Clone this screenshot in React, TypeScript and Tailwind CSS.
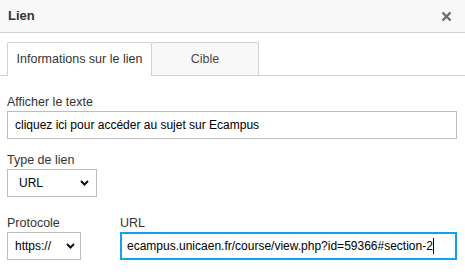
export default function App() {
  return (
    <div className="w-[465px] h-[280px] bg-white text-[12.5px] text-[#333] font-['Liberation_Sans',Arial,sans-serif] overflow-hidden">
      {/* en-tête */}
      <div className="h-[33px] bg-[#f8f8f8] border-b border-[#d1d1d1] flex items-center justify-between pl-2 pr-[13px]">
        <span className="font-bold text-[13px]">Lien</span>
        <svg width="11" height="11" viewBox="0 0 11 11">
          <path d="M1.5 1.5 L9.5 9.5 M9.5 1.5 L1.5 9.5" stroke="#6b6b6b" strokeWidth="2.4" />
        </svg>
      </div>

      {/* onglets */}
      <div className="mt-[9px] flex border-b border-[#d1d1d1] pl-[7px]">
        <div className="w-[145px] h-[34px] -mb-px bg-white border border-b-0 border-[#d1d1d1] rounded-t-[2px] flex items-center justify-center whitespace-nowrap">
          Informations sur le lien
        </div>
        <div className="w-[107px] h-[33px] bg-[#f8f8f8] border border-l-0 border-b-0 border-[#d1d1d1] rounded-t-[2px] flex items-center justify-center text-[#484848]">
          Cible
        </div>
      </div>

      <div className="px-[7px]">
        <label className="block mt-[18px] leading-4 mb-px">Afficher le texte</label>
        <div className="w-[450px] h-[28px] border border-[#bcbcbc] flex items-center pl-[7px] text-black text-[12px] whitespace-nowrap">
          cliquez ici pour accéder au sujet sur Ecampus
        </div>

        <label className="block mt-[13px] leading-4 mb-px">Type de lien</label>
        <div className="w-[90px] h-[28px] border border-[#bcbcbc] flex items-center justify-between pl-[11px] pr-[7px] text-black text-[12px]">
          <span>URL</span>
          <svg width="9" height="6" viewBox="0 0 9 6">
            <path d="M1 1 L4.5 4.5 L8 1" fill="none" stroke="#111" strokeWidth="2" />
          </svg>
        </div>

        <div className="flex gap-[39px] mt-[18px]">
          <div>
            <label className="block leading-4 mb-px">Protocole</label>
            <div className="w-[74px] h-[28px] border border-[#bcbcbc] flex items-center justify-between pl-[7px] pr-[5px] text-black text-[12px]">
              <span>https://</span>
              <svg width="9" height="6" viewBox="0 0 9 6">
                <path d="M1 1 L4.5 4.5 L8 1" fill="none" stroke="#111" strokeWidth="2" />
              </svg>
            </div>
          </div>
          <div>
            <label className="block leading-4 mb-px">URL</label>
            <div className="w-[337px] h-[28px] border-2 border-[#139ff7] flex items-center pl-[5px] text-black text-[12px] whitespace-nowrap overflow-hidden">
              <span>ecampus.unicaen.fr/course/view.php?id=59366#section-2</span>
              <span className="w-px h-[16px] bg-black shrink-0" />
            </div>
          </div>
        </div>
      </div>
    </div>
  );
}
